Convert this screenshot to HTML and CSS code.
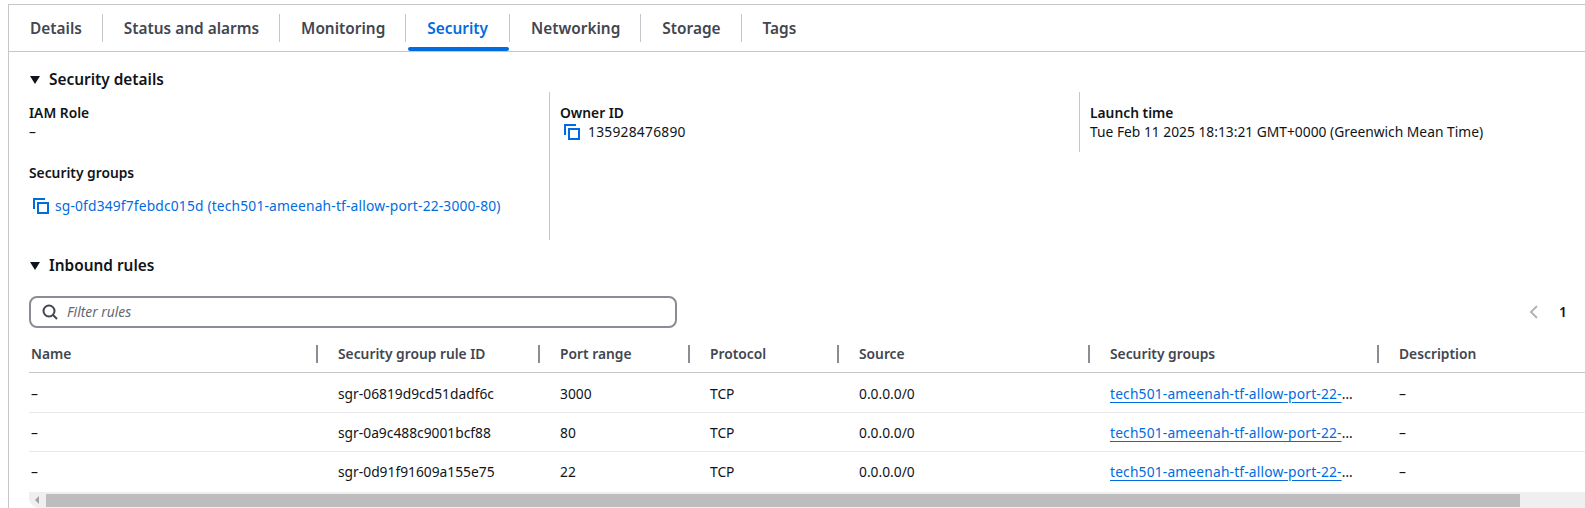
FILE: index.html
```html
<!DOCTYPE html>
<html lang="en">
<head>
    <meta charset="UTF-8">
    <meta name="viewport" content="width=device-width, initial-scale=1.0">
    <title>Instance security</title>
    <link rel="stylesheet" href="styles.css">
</head>
<body>
    <div class="panel">
        <nav class="tabs">
            <a class="tab">Details</a>
            <a class="tab">Status and alarms</a>
            <a class="tab">Monitoring</a>
            <a class="tab tab-active">Security</a>
            <a class="tab">Networking</a>
            <a class="tab">Storage</a>
            <a class="tab tab-last">Tags</a>
        </nav>

        <section class="details-section">
            <h2 class="section-title">
                <svg class="caret" viewBox="0 0 10 8"><path d="M0 0h10L5 8z"/></svg>
                Security details
            </h2>
            <div class="details-grid">
                <div class="details-col">
                    <div class="field">
                        <div class="field-label">IAM Role</div>
                        <div class="field-value">–</div>
                    </div>
                    <div class="field">
                        <div class="field-label">Security groups</div>
                        <div class="field-value sg-link">
                            <svg class="copy-icon" viewBox="0 0 16 16"><path d="M1 11V1h11"/><rect x="5" y="5" width="10" height="10"/></svg>
                            <a class="link">sg-0fd349f7febdc015d (tech501-ameenah-tf-allow-port-22-3000-80)</a>
                        </div>
                    </div>
                </div>
                <div class="details-col col-divided">
                    <div class="field">
                        <div class="field-label">Owner ID</div>
                        <div class="field-value owner">
                            <svg class="copy-icon" viewBox="0 0 16 16"><path d="M1 11V1h11"/><rect x="5" y="5" width="10" height="10"/></svg>
                            135928476890
                        </div>
                    </div>
                </div>
                <div class="details-col col-divided col-short">
                    <div class="field">
                        <div class="field-label">Launch time</div>
                        <div class="field-value">Tue Feb 11 2025 18:13:21 GMT+0000 (Greenwich Mean Time)</div>
                    </div>
                </div>
            </div>
        </section>

        <section class="rules-section">
            <h2 class="section-title">
                <svg class="caret" viewBox="0 0 10 8"><path d="M0 0h10L5 8z"/></svg>
                Inbound rules
            </h2>
            <div class="toolbar">
                <div class="filter">
                    <svg class="search-icon" viewBox="0 0 16 16"><circle cx="7" cy="7" r="5.5"/><path d="M11 11l4 4"/></svg>
                    <span class="filter-placeholder">Filter rules</span>
                </div>
                <div class="pager">
                    <svg class="pager-prev" viewBox="0 0 10 16"><path d="M8 2L2 8l6 6"/></svg>
                    <span class="pager-num">1</span>
                </div>
            </div>
            <table class="rules">
                <colgroup>
                    <col class="c-name">
                    <col class="c-rule">
                    <col class="c-port">
                    <col class="c-proto">
                    <col class="c-source">
                    <col class="c-groups">
                    <col>
                </colgroup>
                <thead>
                    <tr>
                        <th><span class="th-inner">Name</span></th>
                        <th><span class="th-inner">Security group rule ID</span></th>
                        <th><span class="th-inner">Port range</span></th>
                        <th><span class="th-inner">Protocol</span></th>
                        <th><span class="th-inner">Source</span></th>
                        <th><span class="th-inner">Security groups</span></th>
                        <th class="th-last"><span class="th-inner">Description</span></th>
                    </tr>
                </thead>
                <tbody>
                    <tr>
                        <td>–</td>
                        <td>sgr-06819d9cd51dadf6c</td>
                        <td>3000</td>
                        <td>TCP</td>
                        <td>0.0.0.0/0</td>
                        <td><a class="link link-under">tech501-ameenah-tf-allow-port-22-</a>…</td>
                        <td>–</td>
                    </tr>
                    <tr>
                        <td>–</td>
                        <td>sgr-0a9c488c9001bcf88</td>
                        <td>80</td>
                        <td>TCP</td>
                        <td>0.0.0.0/0</td>
                        <td><a class="link link-under">tech501-ameenah-tf-allow-port-22-</a>…</td>
                        <td>–</td>
                    </tr>
                    <tr>
                        <td>–</td>
                        <td>sgr-0d91f91609a155e75</td>
                        <td>22</td>
                        <td>TCP</td>
                        <td>0.0.0.0/0</td>
                        <td><a class="link link-under">tech501-ameenah-tf-allow-port-22-</a>…</td>
                        <td>–</td>
                    </tr>
                </tbody>
            </table>
            <div class="scrollbar">
                <svg class="scroll-arrow" viewBox="0 0 4 8"><path d="M4 0v8L0 4z"/></svg>
                <div class="scroll-thumb"></div>
            </div>
        </section>
    </div>
</body>
</html>
```

FILE: styles.css
```css
html, body {
    height: 100%;
}
body {
    margin: 0;
    padding: 4px 0 0 8px;
    box-sizing: border-box;
    overflow: hidden;
    background: #fff;
    color: #0f141a;
    font-family: "Noto Sans", sans-serif;
    font-size: 13.8px;
    line-height: 20px;
}
.panel {
    height: 504px;
    border-top: 1px solid #c6c6cd;
    border-left: 1px solid #c6c6cd;
    overflow: hidden;
}

/* tabs */
.tabs {
    display: flex;
    align-items: center;
    height: 46px;
    border-bottom: 1px solid #c6c6cd;
}
.tab {
    position: relative;
    display: flex;
    align-items: center;
    box-sizing: border-box;
    height: 28px;
    padding: 2px 20px 0 21px;
    border-right: 1px solid #c6c6cd;
    color: #424650;
    font-size: 15.4px;
    font-weight: 600;
}
.tab-last {
    border-right: none;
}
.tab-active {
    padding-right: 21px;
    color: #006ce0;
}
.tab-active::after {
    content: "";
    position: absolute;
    left: 2px;
    right: 0;
    bottom: -9px;
    height: 4px;
    border-radius: 2px;
    background: #006ce0;
}

/* sections */
.details-section {
    padding: 18px 0 0 20px;
}
.rules-section {
    padding: 16px 0 0 20px;
}
.section-title {
    display: flex;
    align-items: center;
    gap: 9px;
    margin: 0;
    height: 20px;
    font-size: 15.4px;
    font-weight: 600;
    padding-left: 1px;
}
.caret {
    width: 10px;
    height: 8px;
    fill: #0f141a;
}

/* details */
.details-grid {
    display: grid;
    grid-template-columns: 520px 530px 1fr;
    margin-top: 2px;
}
.details-col {
    display: flex;
    flex-direction: column;
    gap: 20px;
    padding: 10px 0 24px;
}
.col-divided {
    border-left: 1px solid #c6c6cd;
    padding-left: 10px;
}
.col-short {
    align-self: start;
    padding-bottom: 10px;
    padding-left: 10px;
}
.field-label {
    margin-bottom: -1px;
    padding-top: 1px;
    font-weight: 600;
}
.sg-link {
    display: flex;
    align-items: center;
    gap: 6px;
    margin: 14px 0 0 4px;
    letter-spacing: 0.17px;
}
.owner {
    display: flex;
    align-items: center;
    gap: 8px;
    padding-left: 4px;
    letter-spacing: 0.25px;
}
.copy-icon {
    width: 16px;
    height: 16px;
    fill: none;
    stroke: #006ce0;
    stroke-width: 2;
}
.link {
    color: #006ce0;
}

/* filter row */
.toolbar {
    display: flex;
    align-items: center;
    justify-content: space-between;
    margin-top: 20px;
    padding-right: 18px;
}
.filter {
    display: flex;
    align-items: center;
    gap: 9px;
    box-sizing: border-box;
    width: 648px;
    height: 32px;
    padding-left: 11px;
    border: 2px solid #8c8c94;
    border-radius: 8px;
}
.search-icon {
    width: 16px;
    height: 16px;
    fill: none;
    stroke: #424650;
    stroke-width: 2;
}
.filter-placeholder {
    color: #656871;
    font-style: italic;
}
.pager {
    display: flex;
    align-items: center;
    gap: 20px;
}
.pager-prev {
    width: 10px;
    height: 16px;
    fill: none;
    stroke: #b4b4bb;
    stroke-width: 2;
}
.pager-num {
    font-weight: 600;
}

/* rules table */
.rules {
    width: 100%;
    margin-top: 7px;
    border-collapse: separate;
    border-spacing: 0;
    table-layout: fixed;
}
.c-name { width: 289px; }
.c-rule { width: 222px; }
.c-port { width: 150px; }
.c-proto { width: 149px; }
.c-source { width: 251px; }
.c-groups { width: 289px; }
.rules th {
    height: 37px;
    padding: 0;
    border-bottom: 1px solid #c6c6cd;
    color: #424650;
    font-weight: 600;
    text-align: left;
}
.th-inner {
    display: flex;
    align-items: center;
    height: 18px;
    padding-left: 20px;
    border-right: 2px solid #8c8c94;
}
.rules th:first-child .th-inner {
    padding-left: 2px;
}
.rules .th-last .th-inner {
    border-right: none;
}
.rules td {
    height: 36px;
    padding: 2px 0 0 20px;
    border-bottom: 1px solid #e8e8ec;
    white-space: nowrap;
}
.rules tr:first-child td {
    height: 37px;
}
.rules tr:last-child td {
    height: 39px;
    padding-top: 0;
    border-bottom: none;
}
.rules td:first-child {
    padding-left: 2px;
}
.link-under {
    text-decoration: underline;
    text-underline-offset: 3px;
    letter-spacing: 0.17px;
}

/* horizontal scrollbar */
.scrollbar {
    display: flex;
    align-items: flex-start;
    height: 13px;
    margin-top: 1px;
    padding: 2px 0 1px;
    border-radius: 0 0 0 10px;
    background: #efefef;
}
.scroll-arrow {
    width: 4px;
    height: 8px;
    margin: 2px 7px 0 6px;
    fill: #a3a3a3;
    flex: none;
}
.scroll-thumb {
    width: 1474px;
    height: 13px;
    background: #bdbdbd;
}
```
